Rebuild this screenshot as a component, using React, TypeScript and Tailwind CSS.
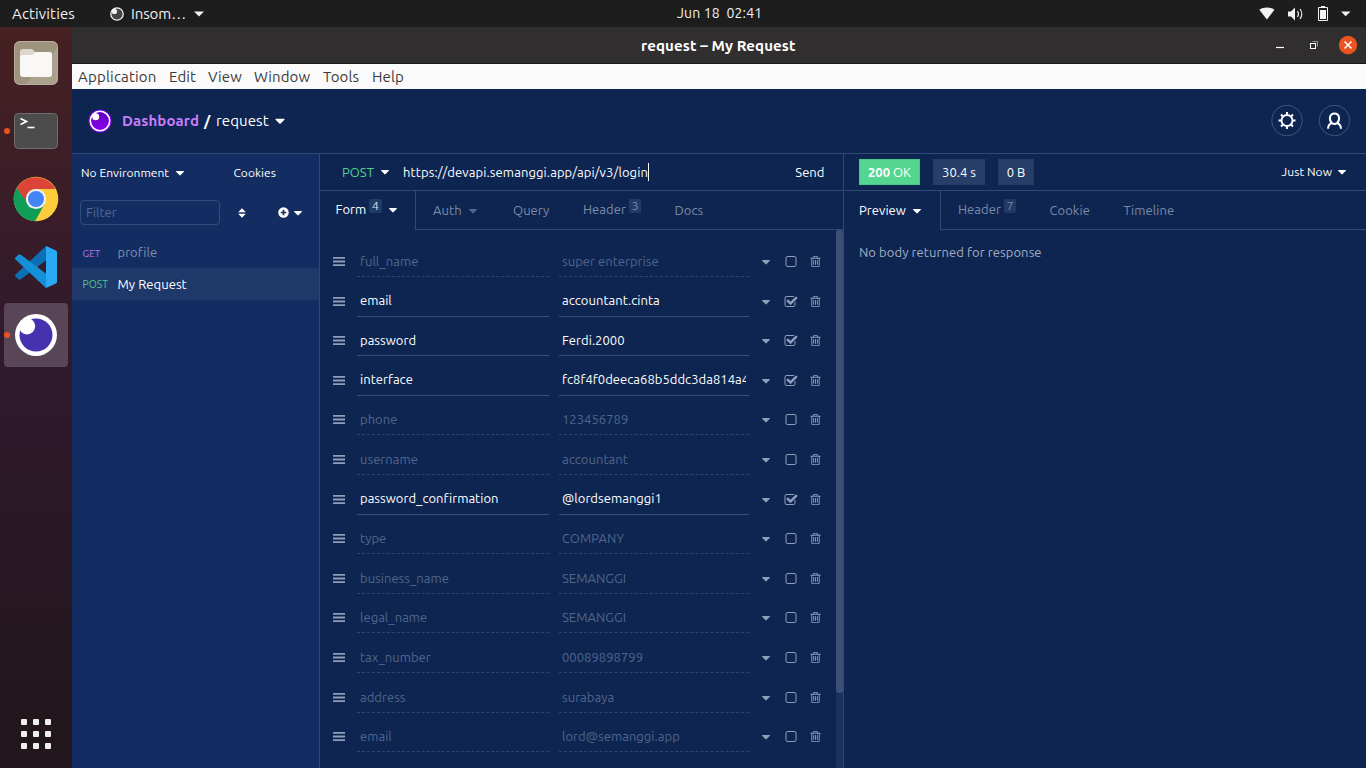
import React from "react";

const CARET =
  "M1408 704q0 26-19 45l-448 448q-19 19-45 19t-45-19l-448-448q-19-19-19-45t19-45 45-19h896q26 0 45 19t19 45z";
const CHECKED =
  "M1472 930v318q0 119-84.5 203.5t-203.5 84.5h-832q-119 0-203.5-84.5t-84.5-203.5v-832q0-119 84.5-203.5t203.5-84.5h832q63 0 117 25 15 7 18 23 3 17-9 29l-49 49q-10 10-23 10-3 0-9-2-23-6-45-6h-832q-66 0-113 47t-47 113v832q0 66 47 113t113 47h832q66 0 113-47t47-113v-254q0-13 9-22l64-64q10-10 23-10 6 0 12 3 20 8 20 29zm231-489l-814 814q-24 24-57 24t-57-24l-430-430q-24-24-24-57t24-57l110-110q24-24 57-24t57 24l263 263 647-647q24-24 57-24t57 24l110 110q24 24 24 57t-24 57z";
const UNCHECKED =
  "M1312 256h-832q-66 0-113 47t-47 113v832q0 66 47 113t113 47h832q66 0 113-47t47-113v-832q0-66-47-113t-113-47zm288 160v832q0 119-84.5 203.5t-203.5 84.5h-832q-119 0-203.5-84.5t-84.5-203.5v-832q0-119 84.5-203.5t203.5-84.5h832q119 0 203.5 84.5t84.5 203.5z";
const TRASH =
  "M704 736v576q0 14-9 23t-23 9h-64q-14 0-23-9t-9-23v-576q0-14 9-23t23-9h64q14 0 23 9t9 23zm256 0v576q0 14-9 23t-23 9h-64q-14 0-23-9t-9-23v-576q0-14 9-23t23-9h64q14 0 23 9t9 23zm256 0v576q0 14-9 23t-23 9h-64q-14 0-23-9t-9-23v-576q0-14 9-23t23-9h64q14 0 23 9t9 23zm128 724v-948h-896v948q0 22 7 40.5t14.5 27 10.5 8.5h832q3 0 10.5-8.5t14.5-27 7-40.5zm-672-1076h448l-48-117q-7-9-17-11h-317q-10 2-17 11zm928 32v64q0 14-9 23t-23 9h-96v948q0 83-47 143.5t-113 60.5h-832q-66 0-113-58.5t-47-141.5v-952h-96q-14 0-23-9t-9-23v-64q0-14 9-23t23-9h309l70-167q15-37 54-63t79-26h320q40 0 79 26t54 63l70 167h309q14 0 23 9t9 23z";

function Glyph({ d, className }: { d: string; className: string }) {
  return (
    <svg viewBox="0 0 1792 1792" fill="currentColor" className={`shrink-0 ${className}`}>
      <path d={d} />
    </svg>
  );
}

function Caret({ className = "" }: { className?: string }) {
  return <Glyph d={CARET} className={`size-[14px] ${className}`} />;
}

function TopBar() {
  return (
    <div className="flex h-[27px] shrink-0 items-center bg-[#1d1d1d] text-[#f2f2f2]">
      <span className="w-[98px] pt-px pl-3 text-[15px] tracking-[0.15px]">Activities</span>
      <svg viewBox="0 0 14 14" className="ml-3 size-[14px]">
        <circle cx="7" cy="7" r="6.2" fill="#454545" stroke="#f2f2f2" strokeWidth="1.3" />
        <circle cx="4.4" cy="4.4" r="2.6" fill="#f2f2f2" />
      </svg>
      <span className="ml-[7px] w-[56px] pt-px whitespace-nowrap text-[15px] tracking-[-0.1px]">Insom…</span>
      <svg viewBox="0 0 10 6" className="ml-[7px] h-[6px] w-[10px]">
        <path d="M0 0.5h10L5 5.5z" fill="#f2f2f2" />
      </svg>
      <span className="ml-[473px] w-[86px] whitespace-pre text-[14px] tracking-[0.15px]">Jun 18  02:41</span>
      <svg viewBox="-1 0 94 16" className="ml-[496px] h-4 w-[94px]" fill="#f2f2f2">
        <path d="M-0.700 3.800C3.500 0.600 10.300 0.600 14.500 3.800L6.900 13.500z" />
        <path d="M28 5.500h3l4-4v13l-4-4h-3z" />
        <path d="M37.500 5q2 3 0 6M40 3q3.600 5 0 10" fill="none" stroke="#f2f2f2" strokeWidth="1.100" />
        <path d="M58.500 1.500h9v13h-9z" fill="none" stroke="#f2f2f2" />
        <path d="M61 0h4v1.500h-4zM60 4h6v9h-6z" />
        <path d="M81 5.500h9.500L85.700 10.300z" />
      </svg>
    </div>
  );
}

function Dock() {
  return (
    <aside className="flex w-[72px] shrink-0 flex-col items-center bg-linear-to-b from-[#462022] via-[#30192c] via-45% to-[#20161b]">
      <svg viewBox="0 0 48 48" className="mt-[12px] size-12">
        <rect x="2.5" y="2.5" width="43" height="43" rx="5" fill="#9d937e" stroke="#b7af9c" />
        <path d="M45 10L14 45h27q4 0 4-4z" fill="#aaa28e" />
        <path d="M8 13q0-3 3-3h9l4 4h13q3 0 3 3v18H8z" fill="#ddd8cb" />
        <path d="M8 18q0-2 2-2h10l4-3h14q2 0 2 2v20q0 3-3 3H11q-3 0-3-3z" fill="#f9f8f6" />
      </svg>
      <div className="mt-[20px] flex h-12 w-full items-center pl-1">
        <i className="size-[6px] rounded-full bg-[#e95420]" />
        <svg viewBox="0 0 48 48" className="ml-[2px] size-12">
          <rect x="2.5" y="6.5" width="43" height="35" rx="4" fill="#4c4c4c" stroke="#6f6f6f" />
          <path d="M8.5 11.5l6 3-6 3" fill="none" stroke="#fff" strokeWidth="1.7" />
          <path d="M15.5 20.5h7" stroke="#fff" strokeWidth="1.6" />
        </svg>
      </div>
      <svg viewBox="0 0 48 48" className="mt-[20px] size-12">
        <circle cx="24" cy="24" r="22.3" fill="#fdcd3c" />
        <path d="M4.7 12.9A22.3 22.3 0 0 1 43.3 13.9H24a10 10 0 0 0-9 6l-1 8z" fill="#db4437" />
        <path d="M4.7 12.9A22.3 22.3 0 0 0 23 46.3L32.7 29 24 33a10 10 0 0 1-8.6-5z" fill="#0f9d58" />
        <circle cx="24" cy="24" r="10.1" fill="#f1f1f1" />
        <circle cx="24" cy="24" r="8" fill="#4285f4" />
      </svg>
      <svg viewBox="0 0 48 48" className="mt-[20px] size-12">
        <path d="M34 3L3.5 31.5q-1 1 0 2l3 2.8q1 .8 2 .1L34.5 17z" fill="#0b6fb5" />
        <path d="M34 45L3.5 16.5q-1-1 0-2l3-2.8q1-.8 2-.1L34.5 31z" fill="#1390d8" />
        <path d="M34 3l10 4.500q1 .5 1 1.700v29.600q0 1.200-1 1.700L34 45z" fill="#29aaf3" />
      </svg>
      <div className="mt-[12px] flex h-16 w-[64px] items-center rounded-[4px] bg-[#584556]">
        <i className="size-[6px] rounded-full bg-[#e95420]" />
        <svg viewBox="0 0 48 48" className="ml-[2px] size-12">
          <circle cx="24" cy="24" r="21" fill="#fff" />
          <circle cx="24" cy="24" r="16.500" fill="#4631ae" />
          <circle cx="15" cy="15.300" r="8.200" fill="#fff" />
        </svg>
      </div>
      <div className="mt-auto mb-[19px] grid grid-cols-3 gap-[6px]">
        {Array.from({ length: 9 }, (_, i) => (
          <i key={i} className="size-[6px] rounded-[1px] bg-[#eeeeec]" />
        ))}
      </div>
    </aside>
  );
}

function TitleBar() {
  return (
    <div className="flex h-[37px] shrink-0 items-center border-b border-[#1b1a1b] bg-[#302e2f] text-white">
      <span className="ml-[569px] w-[155px] pt-[2px] whitespace-nowrap text-[15px] font-bold tracking-[0.12px]">request – My Request</span>
      <svg viewBox="0 0 90 20" className="mr-[5px] ml-auto h-5 w-[90px]">
        <path d="M5 12.500h8" stroke="#fff" strokeWidth="1.200" />
        <path d="M41.500 6.500h5v5" fill="none" stroke="#999" />
        <rect x="39.500" y="8.500" width="5" height="5" fill="none" stroke="#fff" />
        <circle cx="77" cy="10" r="9.200" fill="#e95420" />
        <path d="M73.500 6.500l7 7m0-7l-7 7" stroke="#fff" strokeWidth="1.500" />
      </svg>
    </div>
  );
}

function MenuBar() {
  return (
    <div className="flex h-[25px] shrink-0 items-center bg-[#fafafa] pt-px pl-[6px] text-[15px] tracking-[0.1px] text-[#3a3a3a]">
      <span className="w-[91px] tracking-[0.2px]">Application</span>
      <span className="w-[39px]">Edit</span>
      <span className="w-[46px]">View</span>
      <span className="w-[69px]">Window</span>
      <span className="w-[49px]">Tools</span>
      <span>Help</span>
    </div>
  );
}

function AppHeader() {
  return (
    <header className="flex h-[65px] shrink-0 items-center border-b border-[#304972] bg-[#0e2551] text-[15px] text-white">
      <svg viewBox="0 0 24 24" className="ml-4 size-6">
        <defs>
          <linearGradient id="orb" x1="0" x2="0" y1="0" y2="1">
            <stop offset="0" stopColor="#5a00bb" />
            <stop offset="1" stopColor="#8e00ee" />
          </linearGradient>
        </defs>
        <circle cx="12" cy="12" r="11.600" fill="#7400e1" />
        <circle cx="12" cy="12" r="9.700" fill="url(#orb)" stroke="#fff" strokeWidth="1.600" />
        <circle cx="7.700" cy="7.700" r="3.500" fill="#fff" />
      </svg>
      <span className="ml-[10px] w-[82px] font-bold tracking-[0.1px] text-[#c77dfa]">Dashboard</span>
      <span className="w-[12px] font-bold">/</span>
      <span className="w-[54px] tracking-[0.1px]">request</span>
      <Caret className="ml-[2px] size-[16px]" />
      <svg viewBox="0 0 80 32" className="mr-[15px] ml-auto h-8 w-[80px]" fill="none">
        <circle cx="16" cy="15.500" r="15.300" stroke="#3e5679" />
        <circle cx="63.500" cy="15.500" r="15.300" stroke="#3e5679" />
        <g transform="translate(16 15.500)" stroke="#fff">
          <circle r="5.500" strokeWidth="1.900" />
          <path d="M0-6v-2.500M0 6v2.500M-6 0h-2.500M6 0h2.500M-4.300-4.300l-1.700-1.700M4.300-4.300l1.700-1.700M-4.300 4.300l-1.700 1.700M4.300 4.300l1.700 1.700" strokeWidth="2" />
        </g>
        <g transform="translate(-0.500 -0.300)">
          <path d="M61.500 18.300C58.200 15.500 58.700 8.700 64 8.700s5.800 6.800 2.500 9.600q-2.500 2-5 0zM61.300 18.500c-2.700.7-3.700 2.500-3.700 5.500M66.700 18.500c2.700.7 3.700 2.500 3.700 5.500" stroke="#fff" strokeWidth="2" />
        </g>
      </svg>
    </header>
  );
}

function Sidebar() {
  return (
    <nav className="flex w-[248px] shrink-0 flex-col border-r border-[#304972] bg-[#132d62] text-white">
      <div className="flex h-[37px] items-center pl-[9px]">
        <span className="w-[92px] whitespace-nowrap text-[12px] tracking-[0.03px]">No Environment</span>
        <Caret />
        <span className="ml-[46.500px] text-[12px] tracking-[0.03px]">Cookies</span>
      </div>
      <div className="mt-[9px] flex h-[25px] items-center pl-2">
        <div className="flex h-[25px] w-[140px] items-center rounded-[4px] border border-[#304c7a] pl-[5px] text-[13px] text-[#506a93]">
          Filter
        </div>
        <svg viewBox="0 0 8 10" className="ml-[17.500px] h-[10px] w-[8px]" fill="#fff">
          <path d="M4 .2L7.800 4.300H.2zM4 9.800L7.800 5.700H.2z" />
        </svg>
        <svg viewBox="0 0 12 12" className="ml-[32.500px] size-[11px]">
          <circle cx="6" cy="6" r="5.700" fill="#fff" />
          <path d="M6 3v6M3 6h6" stroke="#132d62" strokeWidth="1.800" />
        </svg>
        <Caret className="ml-[2px]" />
      </div>
      <div className="mt-[11px] flex h-8 items-center pt-[2px] pl-[10.500px]">
        <span className="w-[35px] pt-px text-[10px] tracking-[0.05px] text-[#b877ea]">GET</span>
        <span className="text-[13px] tracking-[0.05px] text-[#8090ad]">profile</span>
      </div>
      <div className="flex h-8 items-center bg-[#1f386a] pt-[2px] pl-[10.500px]">
        <span className="w-[35px] text-[10.400px] text-[#4fc98d]">POST</span>
        <span className="text-[13px] tracking-[0.05px]">My Request</span>
      </div>
    </nav>
  );
}

function Tab({ label, badge, caret, active, className }: { label: string; badge?: string; caret?: boolean; active?: boolean; className: string }) {
  return (
    <div
      className={`flex h-[39px] shrink-0 items-center text-[13px] tracking-[0.05px] ${
        active ? "border-r border-[#304972] text-white" : "border-b border-[#304972] pt-[2px] text-[#7b8ba6]"
      } ${className}`}
    >
      <span className={badge ? "-mt-[2px]" : active ? "pt-px" : ""}>{label}</span>
      {badge && (
        <span
          className={`ml-[3px] flex h-[14px] w-[12.500px] items-center justify-center rounded-[2px] bg-[#223a66] text-[12px] ${
            active ? "-mt-[9px] text-[#dbe0ea]" : "-mt-[10px]"
          }`}
        >
          {badge}
        </span>
      )}
      {caret && <Caret className={active ? (badge ? "-mt-[2px] ml-[4px]" : "ml-[4px]") : "ml-[4px] text-[#4f668c]"} />}
    </div>
  );
}

const fields: [string, string, boolean][] = [
  ["full_name", "super enterprise", false],
  ["email", "accountant.cinta", true],
  ["password", "Ferdi.2000", true],
  ["interface", "fc8f4f0deeca68b5ddc3da814a4", true],
  ["phone", "123456789", false],
  ["username", "accountant", false],
  ["password_confirmation", "@lordsemanggi1", true],
  ["type", "COMPANY", false],
  ["business_name", "SEMANGGI", false],
  ["legal_name", "SEMANGGI", false],
  ["tax_number", "00089898799", false],
  ["address", "surabaya", false],
  ["email", "lord@semanggi.app", false],
];

function FieldRow({ name, value, on }: { name: string; value: string; on: boolean }) {
  const cell = on
    ? "border-solid border-[#354d76] text-white"
    : "border-dashed border-[#2c4672] text-[#50668b]";
  const text = on ? "-mt-[0.5px]" : "";
  return (
    <div className="flex h-[39.6px] shrink-0 items-end pl-[13px] text-[#8f9fb9]">
      <svg viewBox="0 0 12 9" className="mb-[11px] h-[9px] w-[12px]" fill="currentColor">
        <path d="M0 0h12v1.800H0zM0 3.600h12v1.800H0zM0 7.200h12v1.800H0z" />
      </svg>
      <div className={`ml-[12px] flex h-[31px] w-[192px] items-start border-b px-[3px] text-[13px] leading-[30px] tracking-[0.03px] ${cell}`}>
        <span className={text}>{name}</span>
      </div>
      <div className={`ml-[10px] flex h-[31px] w-[190px] items-start border-b px-[3px] text-[13px] leading-[30px] tracking-[0.04px] ${cell}`}>
        <span className={`w-full overflow-hidden whitespace-nowrap ${text}`}>{value}</span>
      </div>
      <Caret className="mb-[8px] ml-[10px]" />
      <Glyph d={on ? CHECKED : UNCHECKED} className="mb-[8px] ml-[10.500px] size-[14px]" />
      <Glyph d={TRASH} className="mb-[9px] ml-[11.500px] size-[13px]" />
    </div>
  );
}

function RequestPane() {
  return (
    <section className="flex w-[524px] shrink-0 flex-col border-r border-[#304972] text-white">
      <div className="flex h-[37px] shrink-0 items-center border-b border-[#304972] pl-[22px] text-[13px]">
        <span className="w-[36px] pt-[2px] text-[#50d28f]">POST</span>
        <Caret />
        <span className="ml-[11px] pt-[2px] whitespace-nowrap tracking-[0.1px]">https://devapi.semanggi.app/api/v3/login</span>
        <i className="h-[18px] w-px bg-white" />
        <span className="mr-[18.500px] ml-auto pt-[2px] tracking-[0.05px]">Send</span>
      </div>
      <div className="flex shrink-0">
        <Tab label="Form" badge="4" caret active className="w-[96px] pl-[15.500px]" />
        <Tab label="Auth" caret className="w-[80px] pl-[17px]" />
        <Tab label="Query" className="w-[70px] pl-[17px]" />
        <Tab label="Header" badge="3" className="w-[92px] pl-[17px]" />
        <Tab label="Docs" className="grow pl-[16.500px]" />
      </div>
      <div className="flex min-h-0 grow">
        <div className="flex w-[516px] flex-col overflow-hidden pt-[7.400px]">
          {fields.map(([name, value, on], i) => (
            <FieldRow key={i} name={name} value={value} on={on} />
          ))}
        </div>
        <div className="w-[7px] bg-[#1b3260]">
          <div className="h-[463px] rounded-[3px] bg-[#3b4f77]" />
        </div>
      </div>
    </section>
  );
}

function ResponsePane() {
  return (
    <section className="flex grow flex-col text-white">
      <div className="flex h-[37px] shrink-0 items-center gap-[13px] border-b border-[#304972] pl-[15px] text-[13px]">
        <span className="flex h-[26px] w-[61px] items-center justify-center gap-[3px] border border-[#48c884] bg-[#54d691] pt-px">
          <b>200</b>
          <span>OK</span>
        </span>
        <span className="flex h-[26px] w-[52px] items-center justify-center bg-[#263e68] pt-px">30.4 s</span>
        <span className="flex h-[26px] w-[36px] items-center justify-center bg-[#263e68] pt-px">0 B</span>
        <span className="ml-auto flex items-center pr-[17px] text-[12px] tracking-[0.05px]">
          Just Now
          <Caret className="ml-[3px]" />
        </span>
      </div>
      <div className="flex shrink-0">
        <Tab label="Preview" caret active className="w-[97px] pl-[15px]" />
        <Tab label="Header" badge="7" className="w-[92px] pl-[17px]" />
        <Tab label="Cookie" className="w-[74px] pl-[16.500px]" />
        <Tab label="Timeline" className="grow pl-[16.500px]" />
      </div>
      <p className="pt-[12px] pl-[15px] text-[13px] leading-[20px] tracking-[0.08px] text-[#a3aec1]">No body returned for response</p>
    </section>
  );
}

export default function App() {
  return (
    <div className="flex h-[768px] w-[1366px] flex-col overflow-hidden bg-[#0e2551] font-['Ubuntu','Noto_Sans',sans-serif]">
      <TopBar />
      <div className="flex min-h-0 grow">
        <Dock />
        <main className="flex min-w-0 grow flex-col">
          <TitleBar />
          <MenuBar />
          <AppHeader />
          <div className="flex min-h-0 grow">
            <Sidebar />
            <RequestPane />
            <ResponsePane />
          </div>
        </main>
      </div>
    </div>
  );
}
